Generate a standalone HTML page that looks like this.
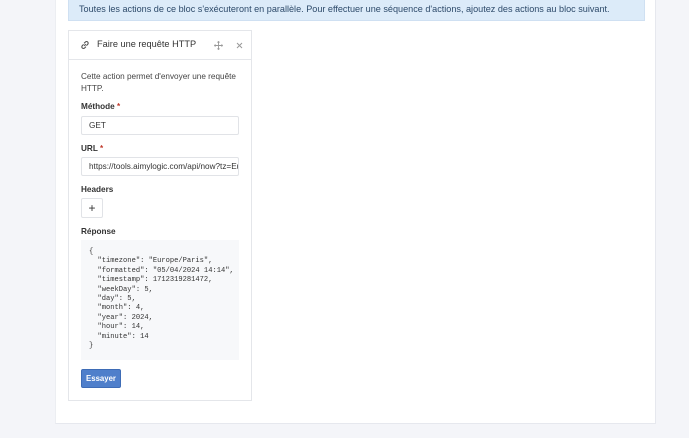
<!DOCTYPE html>
<html><head><meta charset="utf-8">
<style>
*{box-sizing:border-box;margin:0;padding:0}
body{width:689px;height:438px;overflow:hidden;background:#f4f5f9;font-family:"Liberation Sans",sans-serif;color:#333;position:relative}
.panel{position:absolute;left:55px;top:0;width:601px;height:424px;background:#fff;border-right:1px solid #e6e8ee;border-bottom:1px solid #e6e8ee;border-left:1px solid #eceef2}
.info{position:absolute;left:68px;top:0;width:577px;height:21px;background:#dcebf9;border:1px solid #cfe0f2;border-top:none;font-size:9.1px;color:#2d4a6a;padding:4px 0 0 10px;white-space:nowrap}
.card{position:absolute;left:68px;top:30px;width:184px;height:371px;border:1px solid #e4e6ea;background:#fff}
.hdr{height:29px;border-bottom:1px solid #e4e6ea;position:relative}
.hdr .t{position:absolute;left:28px;top:8px;font-size:9.2px;color:#333}
.a{position:absolute;font-size:8.2px}
.desc{left:81px;top:71px;line-height:12px;color:#444;width:165px}
.lbl{font-weight:bold;color:#333}
.lbl i{color:#c0392b;font-style:normal}
.inp{left:81px;width:158px;height:19px;border:1px solid #e1e3e7;border-radius:2px;padding:4px 0 0 7px;color:#333;white-space:nowrap;overflow:hidden}
.plus{left:81px;top:198px;width:22px;height:20px;border:1px solid #e1e3e7;border-radius:2px;text-align:center;font-size:12px;line-height:18px}
pre{position:absolute;left:81px;top:240px;width:158px;height:120px;background:#f7f8fa;font-family:"Liberation Mono",monospace;font-size:7.1px;line-height:9.4px;padding:8px 8px;color:#333}
.btn{left:81px;top:369px;width:40px;height:19px;background:#4f7fcb;border:1px solid #3e6cb6;border-radius:2px;color:#fff;font-weight:bold;font-size:7.8px;text-align:center;line-height:17px}
</style></head><body>
<div class="panel"></div>
<div class="info">Toutes les actions de ce bloc s'exécuteront en parallèle. Pour effectuer une séquence d'actions, ajoutez des actions au bloc suivant.</div>
<div class="card">
 <div class="hdr">
  <svg style="position:absolute;left:11px;top:9px" width="10" height="10" viewBox="0 0 10 10" fill="none" stroke="#555" stroke-width="1.1"><path d="M4.2 5.8 5.8 4.2M3.6 4.4 2.3 5.7a1.6 1.6 0 0 0 2.3 2.3L5.9 6.7M6.4 5.6 7.7 4.3A1.6 1.6 0 0 0 5.4 2L4.1 3.3"/></svg>
  <span class="t">Faire une requête HTTP</span>
  <svg style="position:absolute;left:145px;top:10px" width="9" height="9" viewBox="0 0 9 9" fill="none" stroke="#999" stroke-width="0.9"><path d="M4.5 0.5v8M0.5 4.5h8M3.5 1.5l1-1 1 1M3.5 7.5l1 1 1-1M1.5 3.5l-1 1 1 1M7.5 3.5l1 1-1 1"/></svg>
  <svg style="position:absolute;left:167px;top:11px" width="7" height="7" viewBox="0 0 7 7" stroke="#999" stroke-width="1"><path d="M1 1l5 5M6 1 1 6"/></svg>
 </div>
</div>
<div class="a desc">Cette action permet d'envoyer une requête HTTP.</div>
<div class="a lbl" style="left:81px;top:102px">Méthode <i>*</i></div>
<div class="a inp" style="top:116px">GET</div>
<div class="a lbl" style="left:81px;top:144px">URL <i>*</i></div>
<div class="a inp" style="top:157px">https://tools.aimylogic.com/api/now?tz=Europe/Paris</div>
<div class="a lbl" style="left:81px;top:185px">Headers</div>
<div class="a plus">+</div>
<div class="a lbl" style="left:81px;top:227px">Réponse</div>
<pre>{
  "timezone": "Europe/Paris",
  "formatted": "05/04/2024 14:14",
  "timestamp": 1712319281472,
  "weekDay": 5,
  "day": 5,
  "month": 4,
  "year": 2024,
  "hour": 14,
  "minute": 14
}</pre>
<div class="a btn">Essayer</div>
</body></html>
